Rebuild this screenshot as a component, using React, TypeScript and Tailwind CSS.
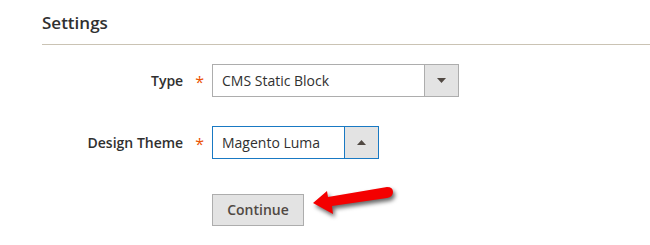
import React from 'react';

function Caret({ up }: { up?: boolean }) {
  return (
    <svg width="9" height="5" viewBox="0 0 9 5" className="fill-[#514943]">
      {up ? <path d="M0 5 L4.5 0 L9 5 Z" /> : <path d="M0 0 L9 0 L4.5 5 Z" />}
    </svg>
  );
}

function Field({ label, value, width, focused, up }: { label: string; value: string; width: string; focused?: boolean; up?: boolean }) {
  return (
    <div className="flex items-center">
      <div className="w-[162px] flex justify-end items-center">
        <span className="text-[14px] font-semibold text-[#303030]">{label}</span>
        <span className="ml-[12px] text-[16px] leading-none text-[#eb5202] relative top-[2px]">*</span>
      </div>
      <div
        className={`ml-[8px] h-[33px] flex border bg-white ${width} ${focused ? 'border-[#1979c3]' : 'border-[#adadad]'}`}
      >
        <div className="flex-1 flex items-center pl-[9px] text-[14px] text-[#303030]">{value}</div>
        <div
          className={`w-[34px] flex items-center justify-center bg-[#e3e3e3] border-l ${focused ? 'border-[#1979c3]' : 'border-[#adadad]'}`}
        >
          <Caret up={up} />
        </div>
      </div>
    </div>
  );
}

export default function App() {
  return (
    <div className="w-[650px] h-[245px] bg-white font-['Open_Sans',sans-serif] pl-[42px] pt-[10px] overflow-hidden">
      {/* Settings title */}
      <div className="text-[17px] font-semibold text-[#303030] pb-[8px] border-b border-[#cac3b4]">Settings</div>

      <div className="mt-[19px] -ml-[42px] pl-[42px]">
        <Field label="Type" value="CMS Static Block" width="w-[247px]" />
        <div className="mt-[29px]">
          <Field label="Design Theme" value="Magento Luma" width="w-[167px]" focused up />
        </div>

        <div className="mt-[35px] pl-[170px] relative">
          <button className="h-[32px] w-[92px] bg-[#e3e3e3] border border-[#adadad] text-[14px] font-semibold text-[#514943]">
            Continue
          </button>
          {/* red annotation arrow */}
          <svg
            width="100"
            height="40"
            viewBox="0 0 100 40"
            className="absolute left-[258px] -top-[14px] drop-shadow-[2px_3px_2px_rgba(0,0,0,0.6)]"
          >
            <path
              d="M13 23 L27 11 L28 17 L87 7 Q93 7 93 12 Q93 17 87 18 L32 26 L33 34 Z"
              fill="#f40000"
            />
          </svg>
        </div>
      </div>
    </div>
  );
}
